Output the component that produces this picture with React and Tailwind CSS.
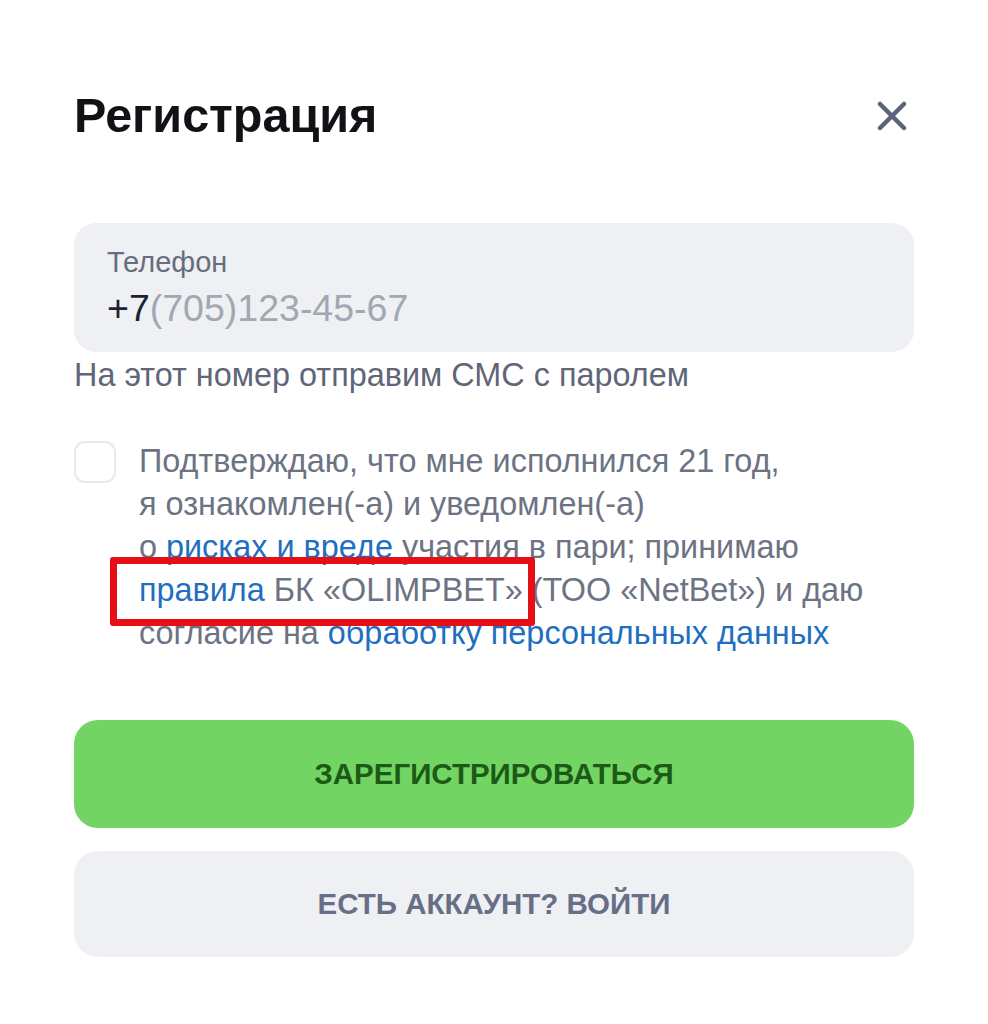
import React, { useState } from "react";

const font = { fontFamily: '"Liberation Sans", Arial, sans-serif' };

function CloseIcon() {
  return (
    <svg width="30" height="30" viewBox="0 0 30 30" fill="none">
      <path
        d="M3 3L27 27M27 3L3 27"
        stroke="#5b6478"
        strokeWidth="4.5"
        strokeLinecap="round"
      />
    </svg>
  );
}

function Link({ children }) {
  return <a className="cursor-pointer text-[#1f6fc0]">{children}</a>;
}

export default function App() {
  const [agree, setAgree] = useState(false);

  return (
    <div className="min-h-[1024px] w-[988px] bg-white" style={font}>
      <div className="relative px-[74px] pt-[91px]">
        <div className="flex items-center justify-between">
          <h1 className="text-[48.5px] font-bold leading-[48px] text-[#111216]">
            Регистрация
          </h1>
          <button className="mr-[7px] mt-[2px]">
            <CloseIcon />
          </button>
        </div>

        <div className="mt-[84px] h-[129px] rounded-[22px] bg-[#eff0f4] px-[33px] pt-[22px]">
          <div className="text-[29px] leading-[34px] text-[#666d7c]">Телефон</div>
          <div className="mt-[7px] text-[37.5px] leading-[44px]">
            <span className="text-[#1d2230]">+7</span>
            <span className="text-[#a2a7b2]">(705)123-45-67</span>
          </div>
        </div>
        <p className="mt-[2px] text-[32.4px] leading-[43px] text-[#5f6677]">
          На этот номер отправим СМС с паролем
        </p>

        <div className="mt-[43px] flex gap-[23px]">
          <button
            onClick={() => setAgree(!agree)}
            className="mt-[1px] h-[42px] w-[42px] shrink-0 rounded-[11px] border-2 border-[#e7e9ee] bg-white"
          />
          <p className="text-[32.4px] leading-[43px] text-[#6c7383]">
            Подтверждаю, что мне исполнился 21 год,
            <br />я ознакомлен(-а) и уведомлен(-а)
            <br />о <Link>рисках и вреде</Link> участия в пари; принимаю
            <br />
            <Link>правила</Link> БК «OLIMPBET» (ТОО «NetBet») и даю
            <br />
            согласие на <Link>обработку персональных данных</Link>
          </p>
        </div>

        <button className="mt-[65px] flex h-[108px] w-full items-center justify-center rounded-[24px] bg-[#72d563] text-[29.5px] font-bold text-[#1c5a16]">
          ЗАРЕГИСТРИРОВАТЬСЯ
        </button>
        <button className="mt-[23px] flex h-[106px] w-full items-center justify-center rounded-[24px] bg-[#eff0f4] text-[29.5px] font-bold text-[#676f86]">
          ЕСТЬ АККАУНТ? ВОЙТИ
        </button>

        <div className="pointer-events-none absolute left-[110px] top-[557px] h-[69px] w-[425px] rounded-[3px] border-[7px] border-[#e60f17]" />
      </div>
    </div>
  );
}
